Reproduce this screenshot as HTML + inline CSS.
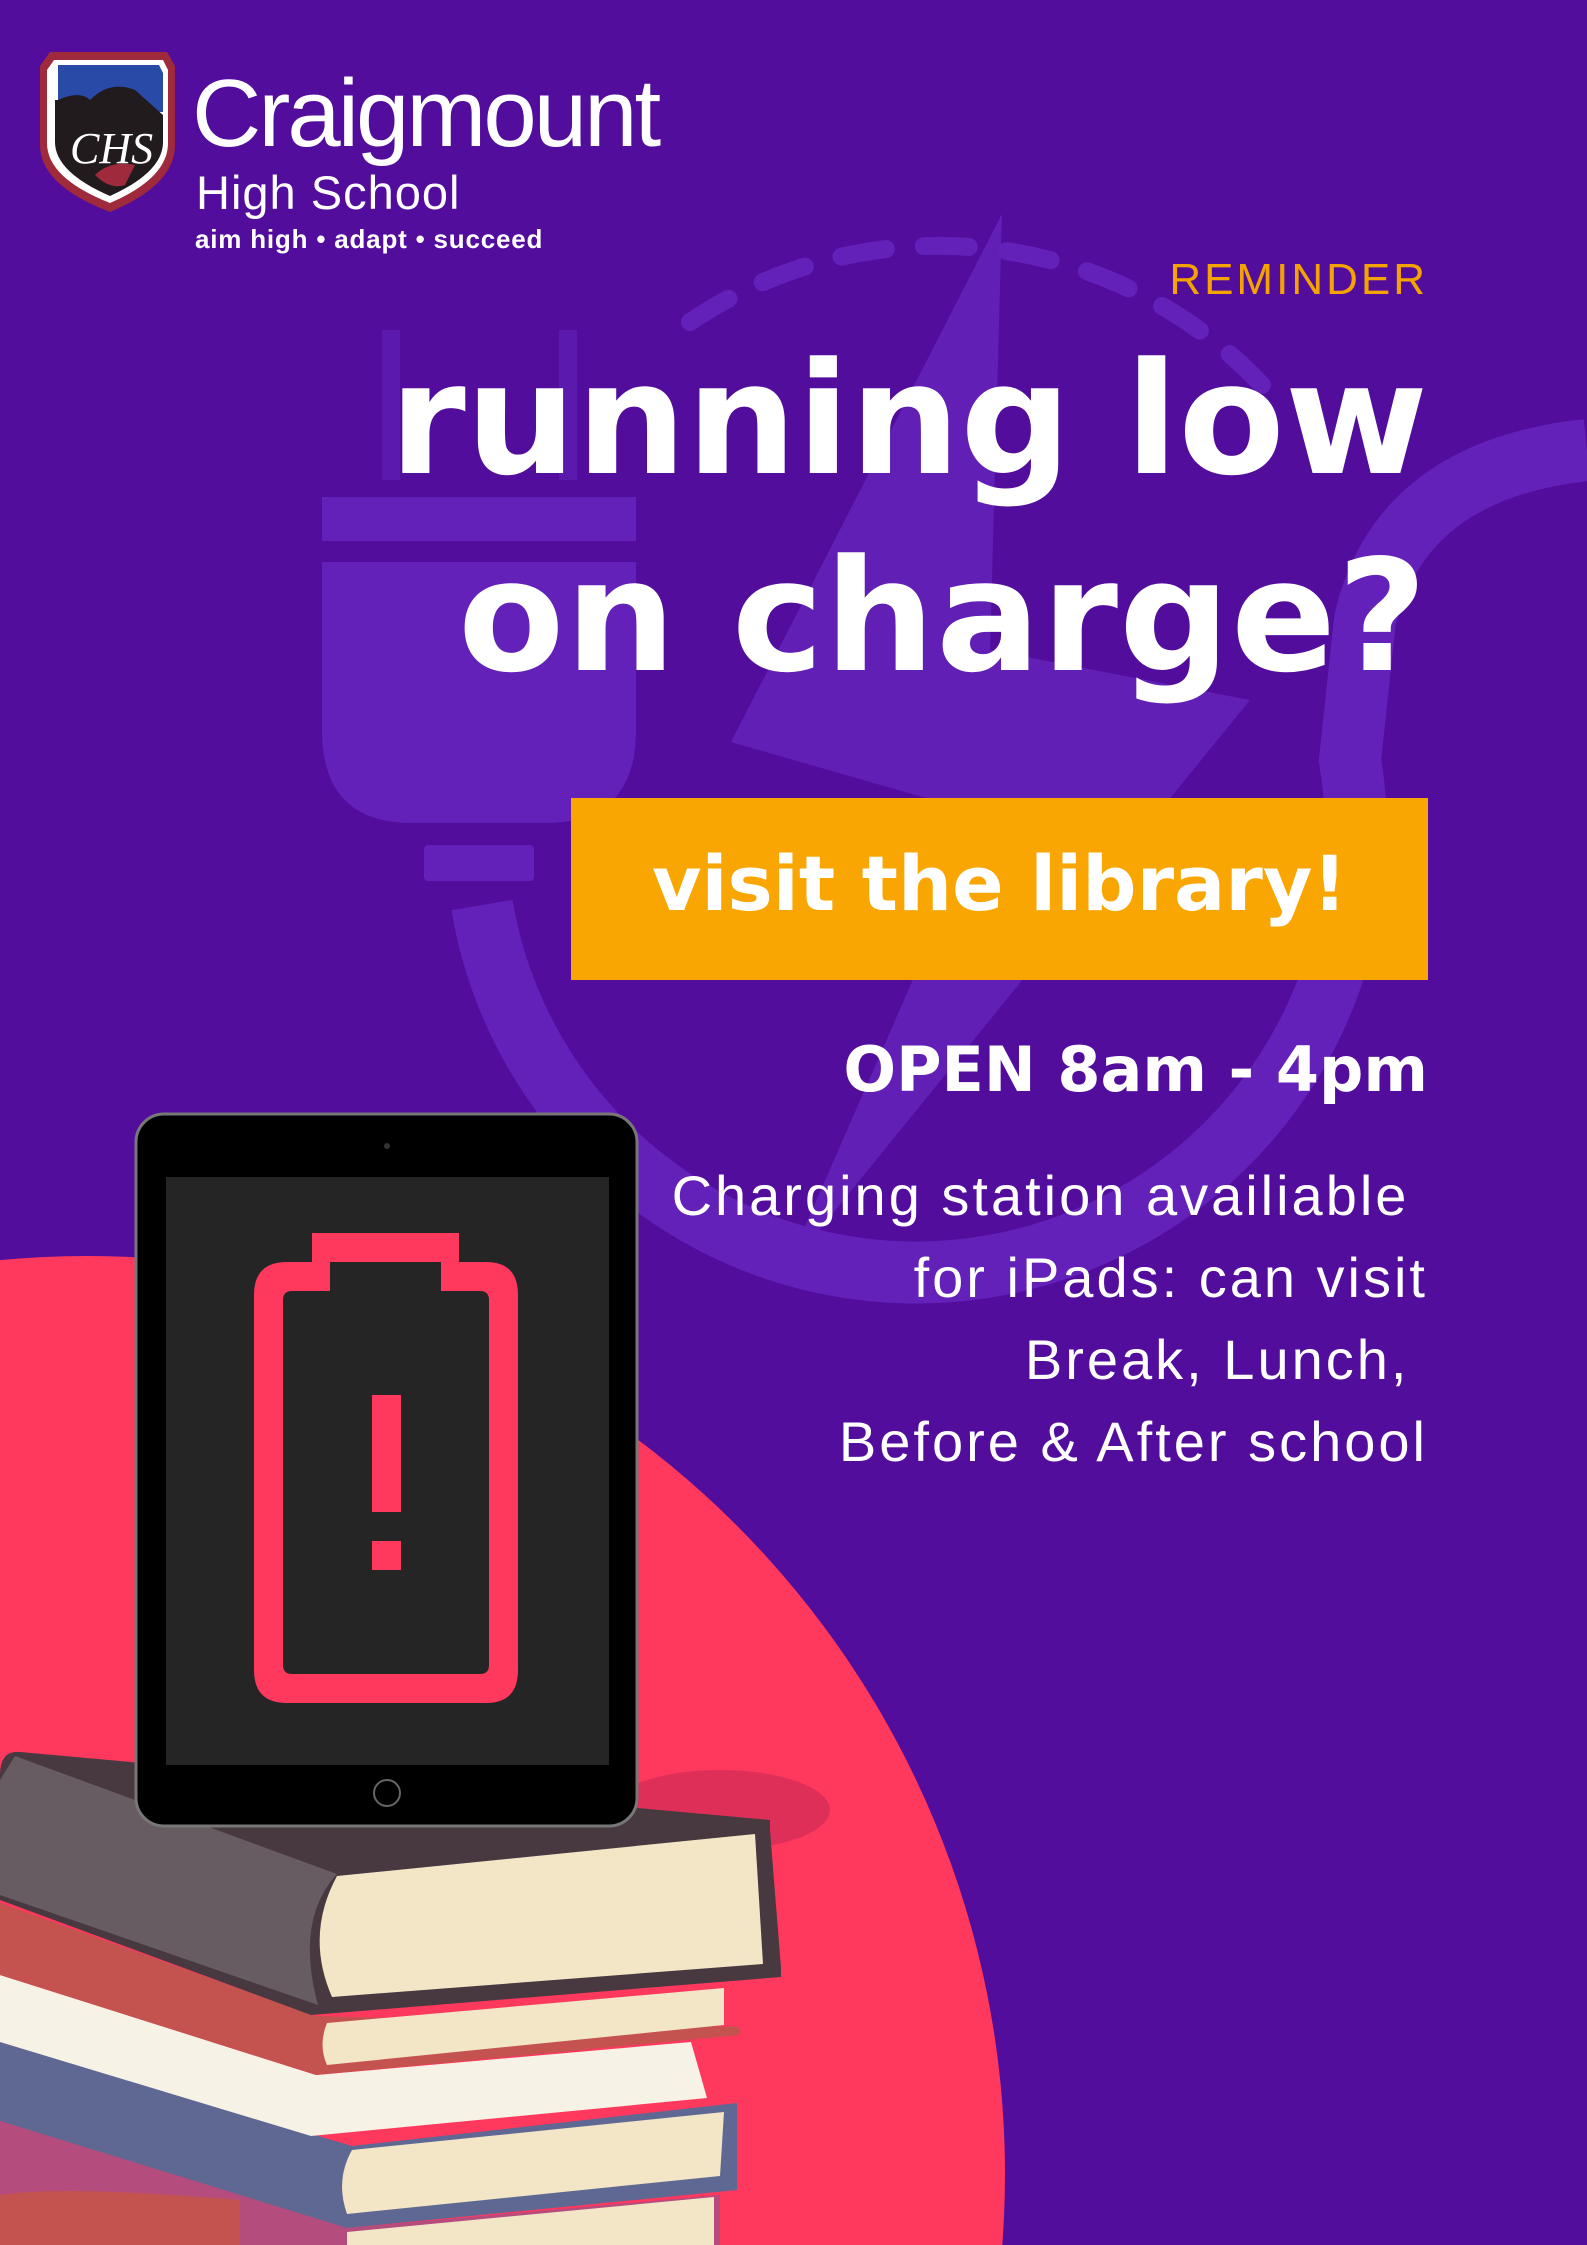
<!DOCTYPE html>
<html><head><meta charset="utf-8">
<style>
html,body{margin:0;padding:0}
body{width:1587px;height:2245px;position:relative;overflow:hidden;background:#520d9d;font-family:"Liberation Sans",sans-serif;color:#fff}
.t{position:absolute;white-space:nowrap;line-height:1}
.r{right:159px;text-align:right}
.d{font-family:"DejaVu Sans",sans-serif;font-weight:bold}
</style></head><body>
<svg width="1587" height="2245" viewBox="0 0 1587 2245" style="position:absolute;left:0;top:0">
<g fill="#6321b9">
<rect x="322" y="497" width="314" height="44"/>
<path d="M322 562 H636 V730 Q636 823 545 823 H412 Q322 823 322 730 Z"/>
<rect x="424" y="845" width="110" height="36" rx="4"/>
<rect x="382" y="330" width="18" height="150" opacity=".6"/>
<rect x="559" y="330" width="18" height="150" opacity=".6"/>
<path d="M1002 214 L731 742 L985 815 L785 1272 L1250 700 L990 650 Z" opacity=".9"/>
</g>
<path d="M482 905 A440 440 0 0 0 1350 760 L1365 620 Q1400 470 1587 450" fill="none" stroke="#6321b9" stroke-width="62"/>
<path d="M690 322 A445 445 0 0 1 1262 385" fill="none" stroke="#6321b9" stroke-width="18" stroke-linecap="round" stroke-dasharray="45 38"/>
<circle cx="87" cy="2174" r="918" fill="#ff385e"/>
<ellipse cx="720" cy="1810" rx="110" ry="40" fill="#c82a55" opacity=".6"/>
<path d="M0 2121 L347 2228 L720 2195 L720 2245 L0 2245Z" fill="#b54c7e"/>
<path d="M347 2232 L714 2197 L714 2245 L347 2245Z" fill="#f2e6c6"/>
<path d="M0 2042 L352 2146 L737 2103 L737 2190 L347 2228 L0 2121Z" fill="#5f6893"/>
<path d="M352 2150 L724 2112 L720 2176 L347 2214 Q335 2180 352 2150Z" fill="#f2e6c6"/>
<path d="M0 1975 L316 2075 L691 2042 L707 2098 L311 2136 L0 2042Z" fill="#f7f2e6"/>
<path d="M0 1903 L316 2016 L740 2027 L740 2035 L316 2075 L0 1975Z" fill="#c4524f"/>
<path d="M327 2023 L724 1988 L724 2025 L327 2065 Q318 2045 327 2023Z" fill="#f2e6c6"/>
<path d="M0 1775 Q0 1750 20 1752 L770 1820 L770 1830 L781 1968 L781 1977 L311 2015 L0 1900Z" fill="#47393f"/>
<path d="M0 1780 L15 1756 L337 1874 Q295 1920 318 2005 L0 1895Z" fill="#665c62"/>
<path d="M337 1876 L755 1834 L763 1964 L332 1997 Q305 1935 337 1876Z" fill="#f2e6c6"/>
<path d="M0 2195 Q60 2185 240 2200 L240 2245 L0 2245Z" fill="#c4524f"/>
<rect x="136" y="1114" width="501" height="712" rx="28" fill="#000" stroke="#777" stroke-width="3"/>
<rect x="166" y="1177" width="443" height="588" fill="#252526"/>
<circle cx="387" cy="1146" r="3" fill="#333"/>
<circle cx="387" cy="1793" r="13" fill="none" stroke="#666" stroke-width="2"/>
<path d="M312 1233 H459 V1262 H486 Q518 1262 518 1295 V1670 Q518 1703 486 1703 H287 Q254 1703 254 1670 V1295 Q254 1262 287 1262 H312 Z M292 1291 Q283 1291 283 1300 V1665 Q283 1674 292 1674 H480 Q489 1674 489 1665 V1300 Q489 1291 480 1291 H441 V1262 H330 V1291 Z" fill="#ff385e" fill-rule="evenodd"/>
<rect x="372" y="1395" width="29" height="117" fill="#ff385e"/>
<rect x="372" y="1541" width="29" height="29" fill="#ff385e"/>
<path d="M50 52 H167 L175 66 V145 Q175 185 110 212 Q40 185 40 145 V66 Z" fill="#9e2a3c"/>
<path d="M54 60 H163 L168 70 V143 Q168 178 110 203 Q47 178 47 143 V70 Z" fill="#fff"/>
<path d="M58 65 H159 L163 73 V112 L58 112 V73Z" fill="#2a4aa8"/>
<path d="M58 100 Q80 90 90 100 Q110 80 135 90 L163 115 V142 Q163 172 110 196 Q55 172 55 142 V100Z" fill="#211b1d"/>
<path d="M95 175 Q110 160 135 165 L125 185 Q110 190 95 175Z" fill="#9e2a3c"/>
<text x="70" y="163" font-family="Liberation Serif,serif" font-style="italic" font-size="44" fill="#fff">CHS</text>
</svg>
<div class="t" style="left:192px;top:66px;font-size:96px;letter-spacing:-3px">Craigmount</div>
<div class="t" style="left:196px;top:169px;font-size:47px;letter-spacing:1px">High School</div>
<div class="t" style="left:195px;top:226px;font-size:26px;font-weight:bold;letter-spacing:.8px">aim high • adapt • succeed</div>
<div class="t r" style="top:258px;font-size:44px;color:#f5a300;letter-spacing:3px">REMINDER</div>
<div class="t r d" style="top:342px;font-size:155px">running low</div>
<div class="t r d" style="top:539px;font-size:155px;letter-spacing:1px">on charge?</div>
<div style="position:absolute;left:571px;top:798px;width:857px;height:182px;background:#f9a602"></div>
<div class="t d" style="left:571px;width:857px;text-align:center;top:846px;font-size:76px">visit the library!</div>
<div class="t r d" style="top:1039px;font-size:62px">OPEN 8am - 4pm</div>
<div class="t r" style="top:1155px;font-size:56px;line-height:82px;letter-spacing:3px">Charging station availiable&nbsp;<br>for iPads: can visit<br>Break, Lunch,&nbsp;<br>Before &amp; After school</div>
</body></html>
